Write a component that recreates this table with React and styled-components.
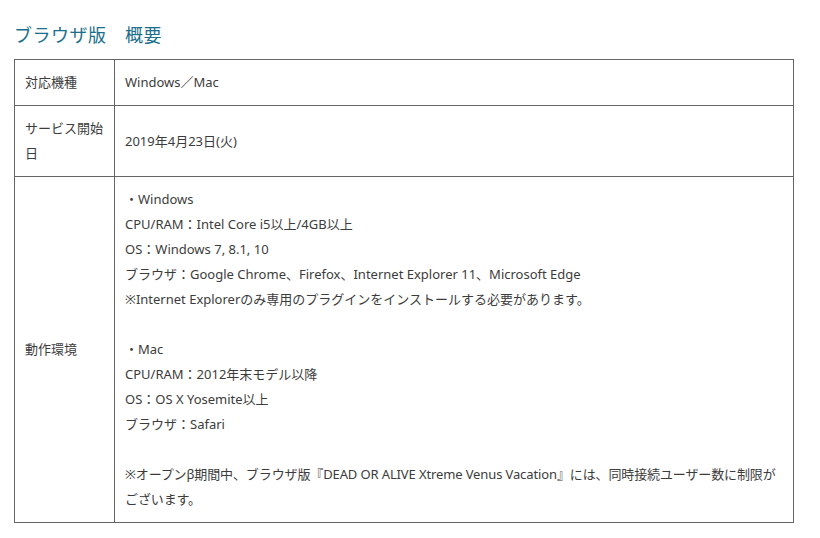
import React from 'react'
import styled, { createGlobalStyle } from 'styled-components'

const GlobalStyle = createGlobalStyle`
  body {
    margin: 0;
    background: #fff;
    font-family: "Noto Sans", "Noto Sans CJK JP", sans-serif;
    color: #333;
  }
`

const Page = styled.div`
  padding: 21px 26px 16px 14px;
`

const Title = styled.h2`
  margin: 0 0 12px 0;
  font-family: "Noto Sans CJK JP", sans-serif;
  font-size: 18px;
  font-weight: 400;
  line-height: 26px;
  color: #1b6f8c;
  letter-spacing: 0.5px;
`

const Table = styled.table`
  width: 780px;
  border-collapse: collapse;
  border: 1px solid #666;
`

const Head = styled.th`
  width: 79px;
  border: 1px solid #666;
  padding: 10px 10px;
  text-align: left;
  vertical-align: middle;
  font-weight: 400;
  font-size: 13px;
  line-height: 25px;
  color: #3c3c3c;
`

const Cell = styled.td`
  border: 1px solid #666;
  padding: 10px 10px;
  vertical-align: middle;
  font-size: 13px;
  line-height: 25px;
  color: #3c3c3c;
`

const Line = styled.div`
  min-height: 25px;
  letter-spacing: ${(p) => (p.$tight ? '-0.12px' : 'normal')};
`

const envLines = [
  '・Windows',
  'CPU/RAM：Intel Core i5以上/4GB以上',
  'OS：Windows 7, 8.1, 10',
  'ブラウザ：Google Chrome、Firefox、Internet Explorer 11、Microsoft Edge',
  '※Internet Explorerのみ専用のプラグインをインストールする必要があります。',
  '',
  '・Mac',
  'CPU/RAM：2012年末モデル以降',
  'OS：OS X Yosemite以上',
  'ブラウザ：Safari',
  '',
  '※オープンβ期間中、ブラウザ版『DEAD OR ALIVE Xtreme Venus Vacation』には、同時接続ユーザー数に制限がございます。',
]

const App = () => {
  return (
    <>
      <GlobalStyle />
      <Page>
        <Title>ブラウザ版　概要</Title>
        <Table>
          <tbody>
            <tr>
              <Head>対応機種</Head>
              <Cell>Windows／Mac</Cell>
            </tr>
            <tr>
              <Head>サービス開始日</Head>
              <Cell>2019年4月23日(火)</Cell>
            </tr>
            <tr>
              <Head>動作環境</Head>
              <Cell>
                {envLines.map((t, i) => (
                  <Line key={i} $tight={i === envLines.length - 1}>{t}</Line>
                ))}
              </Cell>
            </tr>
          </tbody>
        </Table>
      </Page>
    </>
  )
}

export default App
